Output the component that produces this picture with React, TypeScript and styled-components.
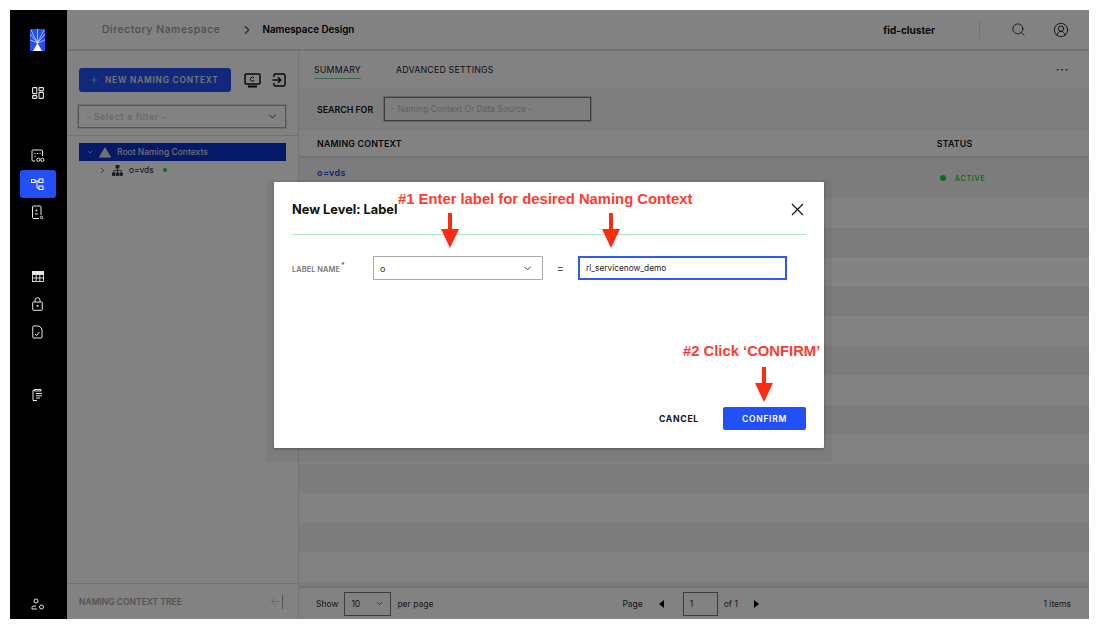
import React from 'react';
import styled, { createGlobalStyle } from 'styled-components';
import { Search, CircleUserRound, ChevronDown, ChevronRight, Plus, X, ArrowLeft } from 'lucide-react';

const GlobalStyle = createGlobalStyle`
  html, body {
    margin: 0;
    padding: 0;
    background: #fff;
    font-family: Inter, "Liberation Sans", sans-serif;
  }
`;

const Page = styled.div`
  width: 1100px;
  height: 628px;
  box-sizing: border-box;
  padding: 10px;
  overflow: hidden;
`;

const Frame = styled.div`
  position: relative;
  width: 1079px;
  height: 609px;
  display: flex;
  background: #fff;
`;

const Sidebar = styled.nav`
  width: 57px;
  flex: none;
  box-sizing: border-box;
  padding-right: 2px;
  background: #000;
  display: flex;
  flex-direction: column;
  align-items: center;
  color: #e8e8e8;
  position: relative;
  z-index: 2;
`;

const LogoBox = styled.div`
  margin-top: 19px;
  width: 15px;
  height: 22px;
  background: #2350f5;
`;

const RailIcon = styled.div<{ $top: number; $active?: boolean }>`
  margin-top: ${(p) => p.$top}px;
  width: 36px;
  height: 28px;
  border-radius: 3px;
  display: flex;
  align-items: center;
  justify-content: center;
  background: ${(p) => (p.$active ? '#2350f5' : 'transparent')};
`;

const Main = styled.div`
  flex: 1;
  min-width: 0;
  display: flex;
  flex-direction: column;
  background: #fff;
`;

const TopBar = styled.header`
  height: 41px;
  flex: none;
  box-sizing: border-box;
  display: flex;
  align-items: center;
  padding-left: 35px;
  border-bottom: 2px solid #e4e4e4;
  background: #fff;
`;

const Crumb = styled.span<{ $current?: boolean }>`
  font-size: ${(p) => (p.$current ? '9.8px' : '10.5px')};
  font-weight: ${(p) => (p.$current ? 600 : 500)};
  letter-spacing: ${(p) => (p.$current ? '0' : '0.5px')};
  color: ${(p) => (p.$current ? '#000' : '#999')};
`;

const CrumbArrow = styled.span`
  display: flex;
  margin: 0 9px 0 19px;
  color: #555;
`;

const Cluster = styled.span`
  margin-left: auto;
  font-size: 10px;
  font-weight: 700;
  color: #111;
`;

const TopDivider = styled.span`
  width: 1px;
  height: 18px;
  background: #ddd;
  margin: 0 31px 0 44px;
`;

const TopIcon = styled.span<{ $gap: number }>`
  display: flex;
  color: #111;
  margin-right: ${(p) => p.$gap}px;
`;

const Body = styled.div`
  flex: 1;
  min-height: 0;
  display: flex;
`;

const TreePanel = styled.aside`
  width: 232px;
  flex: none;
  box-sizing: border-box;
  display: flex;
  flex-direction: column;
  border-right: 1px solid #e4e4e4;
  background: #fff;
`;

const TreeTools = styled.div`
  padding: 17px 12px 0;
  height: 85px;
  flex: none;
  box-sizing: border-box;
  border-bottom: 1px solid #e2e2e2;
`;

const ToolRow = styled.div`
  display: flex;
  align-items: center;
`;

const NewButton = styled.div`
  width: 152px;
  height: 24px;
  flex: none;
  box-sizing: border-box;
  padding-left: 10px;
  border-radius: 3px;
  background: #2350f5;
  color: #e4e4e4;
  display: flex;
  align-items: center;
  gap: 6px;
  font-size: 8.3px;
  font-weight: 600;
  letter-spacing: 0.8px;
  white-space: nowrap;
`;

const ToolIcon = styled.span<{ $left: number }>`
  display: flex;
  align-items: center;
  margin-left: ${(p) => p.$left}px;
  color: #111;
`;

const FilterBox = styled.div`
  margin: 13px 0 0 -1px;
  width: 208px;
  height: 23px;
  box-sizing: border-box;
  border: 1px solid #aaa;
  box-shadow: 0 0 0 0.5px #bbb;
  padding: 0 7px;
  display: flex;
  align-items: center;
  justify-content: space-between;
  font-size: 9px;
  letter-spacing: 0.6px;
  color: #c4c4c4;
`;

const TreeBody = styled.div`
  flex: 1;
  padding: 7px 12px 0;
`;

const RootRow = styled.div`
  height: 18px;
  background: #0a31cf;
  color: #ddd;
  display: flex;
  align-items: center;
  padding-left: 7px;
  font-size: 8.5px;
  font-weight: 500;
`;

const ChildRow = styled.div`
  height: 18px;
  display: flex;
  align-items: center;
  padding-left: 19px;
  font-size: 8.5px;
  color: #222;
`;

const ChildName = styled.span`
  margin-left: 6px;
`;

const TreeDot = styled.span`
  width: 4px;
  height: 4px;
  border-radius: 50%;
  background: #1fcf35;
  margin-left: 9px;
  flex: none;
`;

const TreeFooter = styled.div`
  height: 36px;
  flex: none;
  box-sizing: border-box;
  border-top: 1px solid #e2e2e2;
  display: flex;
  align-items: center;
  justify-content: space-between;
  padding: 0 15px 0 12px;
  font-size: 8.5px;
  font-weight: 600;
  color: #a4a4a4;
`;

const Content = styled.section`
  flex: 1;
  min-width: 0;
  display: flex;
  flex-direction: column;
  background: #fff;
`;

const Tabs = styled.div`
  height: 37px;
  flex: none;
  display: flex;
  align-items: flex-start;
  padding: 13px 20px 0 15px;
  box-sizing: border-box;
  background: #fff;
`;

const Tab = styled.span<{ $active?: boolean; $left?: number }>`
  font-size: 8.8px;
  letter-spacing: 0.2px;
  color: #222;
  padding-bottom: 3px;
  margin-left: ${(p) => p.$left ?? 0}px;
  border-bottom: ${(p) => (p.$active ? '1px solid #6fd08a' : '1px solid transparent')};
`;

const More = styled.span`
  margin-left: auto;
  font-size: 10px;
  font-weight: 700;
  letter-spacing: 1px;
  color: #111;
  line-height: 10px;
`;

const SearchRow = styled.div`
  height: 42px;
  flex: none;
  box-sizing: border-box;
  display: flex;
  align-items: center;
  padding: 1px 0 0 18px;
  background: #f8f8f8;
  border-bottom: 1px solid #eee;
`;

const SearchLabel = styled.span`
  font-size: 8.8px;
  font-weight: 600;
  color: #111;
`;

const SearchBox = styled.div`
  margin-left: 11px;
  width: 207px;
  height: 24px;
  box-sizing: border-box;
  border: 1px solid #777;
  box-shadow: 0 0 0 0.5px #999;
  display: flex;
  align-items: center;
  padding-left: 6px;
  font-size: 8.5px;
  color: #bbb;
  background: #f8f8f8;
`;

const TableHead = styled.div`
  height: 28px;
  flex: none;
  box-sizing: border-box;
  display: flex;
  align-items: center;
  padding-left: 18px;
  font-size: 8.8px;
  font-weight: 600;
  letter-spacing: 0.2px;
  color: #111;
  background: #fff;
  border-bottom: 2px solid #e4e4e4;
`;

const StatusHead = styled.span`
  margin-left: 535px;
`;

const Rows = styled.div`
  flex: 1;
  min-height: 0;
  display: flex;
  flex-direction: column;
  background: #f4f4f4;
`;

const Row = styled.div<{ $light: boolean; $height: number }>`
  height: ${(p) => p.$height}px;
  flex: none;
  display: flex;
  align-items: center;
  padding-left: 18px;
  background: ${(p) => (p.$light ? '#fff' : '#f4f4f4')};
`;

const ContextLink = styled.span`
  font-size: 9px;
  font-weight: 600;
  letter-spacing: 0.4px;
  color: #1f45e0;
  margin-bottom: 12px;
`;

const ActiveCell = styled.span`
  margin-left: 594px;
  display: flex;
  align-items: center;
  gap: 9px;
  font-size: 7px;
  font-weight: 600;
  letter-spacing: 0.8px;
  color: #1fcf35;
`;

const ActiveDot = styled.span`
  width: 6px;
  height: 6px;
  border-radius: 50%;
  background: #1fcf35;
  flex: none;
`;

const Pager = styled.footer`
  height: 33px;
  flex: none;
  box-sizing: border-box;
  border-top: 2px solid #e4e4e4;
  display: flex;
  align-items: center;
  padding: 0 18px 0 17px;
  font-size: 8.5px;
  color: #333;
`;

const SmallBox = styled.div<{ $w: number; $left: number; $right: number }>`
  width: ${(p) => p.$w}px;
  height: 24px;
  box-sizing: border-box;
  border: 1px solid #777;
  margin: 0 ${(p) => p.$right}px 0 ${(p) => p.$left}px;
  padding: 0 6px;
  display: flex;
  align-items: center;
  justify-content: space-between;
  font-size: 8.5px;
`;

const PageLabel = styled.span`
  margin-left: 189px;
`;

const PageArrow = styled.span<{ $dir: 'left' | 'right'; $left: number; $right: number }>`
  width: 0;
  height: 0;
  border-top: 4px solid transparent;
  border-bottom: 4px solid transparent;
  border-${(p) => (p.$dir === 'left' ? 'right' : 'left')}: 5px solid #000;
  margin: 0 ${(p) => p.$right}px 0 ${(p) => p.$left}px;
`;

const Items = styled.span`
  margin-left: auto;
`;

const Scrim = styled.div`
  position: absolute;
  inset: 0 0 0 57px;
  background: rgba(0, 0, 0, 0.49);
  z-index: 1;
`;

const Modal = styled.div`
  position: absolute;
  left: 264px;
  top: 172px;
  width: 550px;
  height: 266px;
  box-sizing: border-box;
  padding: 0 18px 18px 18px;
  background: #fff;
  border-radius: 1px;
  box-shadow: 0 6px 0 8px rgba(0, 0, 0, 0.04), 0 1px 3px rgba(0, 0, 0, 0.3);
  z-index: 3;
  display: flex;
  flex-direction: column;
`;

const ModalHead = styled.div`
  height: 53px;
  flex: none;
  box-sizing: border-box;
  display: flex;
  align-items: center;
  justify-content: space-between;
  padding-top: 3px;
  border-bottom: 1.5px solid #aee6bd;
`;

const ModalTitle = styled.h2`
  margin: 0;
  font-size: 12.8px;
  font-weight: 700;
  color: #111;
`;

const CloseIcon = styled.span`
  display: flex;
  margin-right: -2px;
  color: #111;
`;

const FormRow = styled.div`
  display: flex;
  align-items: center;
  margin-top: 21px;
`;

const FieldLabel = styled.label`
  width: 81px;
  padding-top: 2px;
  font-size: 7.5px;
  font-weight: 600;
  color: #777;
`;

const Required = styled.sup`
  font-size: 7px;
  line-height: 0;
  margin-left: 1px;
  color: #555;
`;

const SelectField = styled.div`
  width: 170px;
  height: 24px;
  box-sizing: border-box;
  border: 1px solid #aaa;
  border-radius: 1px;
  padding: 0 9px 0 6px;
  display: flex;
  align-items: center;
  justify-content: space-between;
  font-size: 9px;
  color: #333;
`;

const Equals = styled.span`
  width: 35px;
  text-align: center;
  font-size: 11px;
  color: #555;
`;

const TextField = styled.div`
  width: 209px;
  height: 24px;
  box-sizing: border-box;
  border: 2px solid #2f59f0;
  padding-left: 6px;
  display: flex;
  align-items: center;
  font-size: 8.3px;
  color: #222;
`;

const ModalActions = styled.div`
  margin-top: auto;
  display: flex;
  align-items: center;
  justify-content: flex-end;
`;

const CancelButton = styled.span`
  font-size: 8.7px;
  font-weight: 700;
  letter-spacing: 0.7px;
  color: #111;
  margin-right: 24px;
`;

const ConfirmButton = styled.div`
  width: 83px;
  height: 23px;
  border-radius: 2px;
  background: #2350f5;
  color: #fff;
  display: flex;
  align-items: center;
  justify-content: center;
  font-size: 8.5px;
  font-weight: 600;
  letter-spacing: 0.7px;
`;

const Callout = styled.span<{ $x: number; $y: number }>`
  position: absolute;
  left: ${(p) => p.$x}px;
  top: ${(p) => p.$y}px;
  z-index: 4;
  font-family: "Liberation Sans", Arial, sans-serif;
  font-size: 14.8px;
  font-weight: 700;
  color: #ff3b30;
  white-space: nowrap;
`;

const ArrowMark = styled.svg<{ $x: number; $y: number }>`
  position: absolute;
  left: ${(p) => p.$x}px;
  top: ${(p) => p.$y}px;
  z-index: 4;
`;

const Arrow = ({ x, y }: { x: number; y: number }) => (
  <ArrowMark $x={x} $y={y} width="18" height="35" viewBox="0 0 18 35">
    <path d="M7 0h4v16h7L9 35 0 16h7z" fill="#ff2a12" />
  </ArrowMark>
);

// product mark: rays fanning out over a white peak
const Logo = () => (
  <LogoBox>
    <svg width="15" height="22" viewBox="0 0 15 22" stroke="#fff" strokeWidth="0.6" fill="none">
      <path d="M7.5 0v14M7.5 14L0 5M7.5 14L15 5M7.5 14L1 1M7.5 14L14 1M7.5 14L0 11M7.5 14L15 11" />
      <path d="M7.5 14L12 22H3z" fill="#fff" stroke="none" />
    </svg>
  </LogoBox>
);

const Flow = () => (
  <svg width="13" height="13" viewBox="0 0 13 13" fill="none" stroke="#fff" strokeWidth="1">
    <rect x="0.5" y="1.5" width="3.5" height="3" />
    <rect x="8" y="1" width="4" height="3.5" />
    <rect x="8" y="8" width="4" height="3.5" />
    <path d="M4 3h4M6 3v7h2" />
  </svg>
);

const Apps = () => (
  <svg width="12" height="12" viewBox="0 0 12 12" fill="none" stroke="#e8e8e8" strokeWidth="1.1">
    <rect x="0.6" y="0.6" width="4.2" height="6" rx="0.6" />
    <rect x="7" y="0.6" width="4.4" height="3" rx="0.6" />
    <rect x="0.6" y="8.6" width="4.2" height="2.8" rx="0.6" />
    <rect x="7" y="5.400" width="4.4" height="6" rx="0.6" />
  </svg>
);

const Links = () => (
  <svg width="14" height="14" viewBox="0 0 14 14" fill="none" stroke="#e8e8e8" strokeWidth="1">
    <path d="M4 12H2Q1 12 1 11V2Q1 1 2 1h8.500Q11.500 1 11.500 2v5" />
    <path d="M3.500 4.500h1.200M6 4.500h1.200M8.500 4.500h1.200M3.500 7.500h1.200" />
    <circle cx="7.300" cy="10.800" r="1.600" />
    <circle cx="11.300" cy="10.800" r="1.600" />
  </svg>
);

const Badge = () => (
  <svg width="13" height="15" viewBox="0 0 13 15" fill="none" stroke="#e8e8e8" strokeWidth="1">
    <path d="M8 13.500H2.500Q1.500 13.500 1.500 12.500V2Q1.500 1 2.500 1h6.500Q10 1 10 2v8" />
    <path d="M4 9h3" />
    <circle cx="5.500" cy="5.500" r="1" fill="#e8e8e8" stroke="none" />
    <circle cx="10.500" cy="12.500" r="1.200" />
  </svg>
);

const TableGrid = () => (
  <svg width="12" height="11" viewBox="0 0 12 11" fill="none" stroke="#e8e8e8" strokeWidth="0.9">
    <rect x="0.500" y="0.500" width="11" height="10" />
    <rect x="0.500" y="0.500" width="11" height="3" fill="#e8e8e8" />
    <path d="M4.200 3.500v7M7.800 3.500v7M0.500 7h11" />
  </svg>
);

const LockIcon = () => (
  <svg width="11" height="14" viewBox="0 0 11 14" fill="none" stroke="#e8e8e8" strokeWidth="1">
    <rect x="0.700" y="5" width="9.600" height="8.300" rx="0.800" />
    <path d="M3 5V3.200a2.500 2.500 0 0 1 5 0V5" />
    <circle cx="5.500" cy="9" r="1" fill="#e8e8e8" stroke="none" />
  </svg>
);

const FileCheck = () => (
  <svg width="11" height="14" viewBox="0 0 11 14" fill="none" stroke="#e8e8e8" strokeWidth="1">
    <path d="M1.500 1h5.500L10 4v8Q10 13 9 13H1.800Q0.800 13 0.800 12V1.700Q0.800 1 1.500 1z" />
    <path d="M3 9l1.600 1.500L7.500 7" />
  </svg>
);

const Clipboard = () => (
  <svg width="11" height="13" viewBox="0 0 11 13" fill="none" stroke="#e8e8e8" strokeWidth="1">
    <path d="M2 2.500H1v10h4" />
    <path d="M2.500 1.500h6.500v1.500H2.500z" />
    <path d="M4 5.500h6M4 7.800h6M4 10h4" />
  </svg>
);

const AdminGear = () => (
  <svg width="14" height="13" viewBox="0 0 14 13" fill="none" stroke="#e8e8e8" strokeWidth="1">
    <circle cx="5" cy="3" r="2" />
    <path d="M1 11V9.500Q1 8 3 8h2M1 11h5" />
    <circle cx="10.500" cy="9" r="2" />
  </svg>
);

const Monitor = () => (
  <svg width="17" height="15" viewBox="0 0 17 15" fill="none" stroke="#111" strokeWidth="1.500">
    <rect x="1" y="1" width="15" height="10" rx="1" />
    <path d="M4 13.500h9" strokeWidth="2" />
    <path d="M10 5a2 2 0 1 0 .2 2" strokeWidth="1" />
  </svg>
);

const ImportBox = () => (
  <svg width="14" height="14" viewBox="0 0 14 14" fill="none" stroke="#111" strokeWidth="1.400">
    <path d="M2 4V2.200Q2 1 3.200 1h8.300Q13 1 13 2.200v9.600Q13 13 11.500 13H3.200Q2 13 2 11.800V10" />
    <path d="M0.500 7h8M6 4.300L8.800 7 6 9.700" />
  </svg>
);

const HierarchyIcon = () => (
  <svg width="11" height="11" viewBox="0 0 11 11" fill="#333" stroke="#333" strokeWidth="0.8">
    <rect x="4" y="0.500" width="3" height="2.500" />
    <rect x="0.500" y="8" width="2.500" height="2.500" />
    <rect x="4.250" y="8" width="2.500" height="2.500" />
    <rect x="8" y="8" width="2.500" height="2.500" />
    <path d="M5.500 3v5M1.750 8V5.500h7.500V8" fill="none" />
  </svg>
);

const PeakMark = styled.svg`
  margin: 0 6px 0 5px;
`;

const Peak = () => (
  <PeakMark width="12" height="11" viewBox="0 0 12 11">
    <path d="M6 0l6 10H0z" fill="#ddd" />
    <path d="M0 10.500h12" stroke="#999" strokeWidth="1" />
  </PeakMark>
);

const ChildChevron = styled.span`
  display: flex;
  margin-right: 5px;
`;

const CollapseBar = styled.span`
  width: 1px;
  height: 14px;
  background: #aaa;
`;

const rowCount = 14;

export default function App() {
  return (
    <>
      <GlobalStyle />
      <Page>
        <Frame>
          <Sidebar>
            <Logo />
            <RailIcon $top={28}><Apps /></RailIcon>
            <RailIcon $top={35}><Links /></RailIcon>
            <RailIcon $top={0} $active><Flow /></RailIcon>
            <RailIcon $top={0}><Badge /></RailIcon>
            <RailIcon $top={36}><TableGrid /></RailIcon>
            <RailIcon $top={0}><LockIcon /></RailIcon>
            <RailIcon $top={0}><FileCheck /></RailIcon>
            <RailIcon $top={34}><Clipboard /></RailIcon>
            <RailIcon $top={182}><AdminGear /></RailIcon>
          </Sidebar>

          <Main>
            <TopBar>
              <Crumb>Directory Namespace</Crumb>
              <CrumbArrow><ChevronRight size={14} /></CrumbArrow>
              <Crumb $current>Namespace Design</Crumb>
              <Cluster>fid-cluster</Cluster>
              <TopDivider />
              <TopIcon $gap={27}><Search size={15} strokeWidth={1.3} /></TopIcon>
              <TopIcon $gap={20}><CircleUserRound size={16} strokeWidth={1.3} /></TopIcon>
            </TopBar>

            <Body>
              <TreePanel>
                <TreeTools>
                  <ToolRow>
                    <NewButton>
                      <Plus size={10} strokeWidth={1.5} />
                      NEW NAMING CONTEXT
                    </NewButton>
                    <ToolIcon $left={13}><Monitor /></ToolIcon>
                    <ToolIcon $left={11}><ImportBox /></ToolIcon>
                  </ToolRow>
                  <FilterBox>
                    - Select a filter -
                    <ChevronDown size={11} color="#333" />
                  </FilterBox>
                </TreeTools>
                <TreeBody>
                  <RootRow>
                    <ChevronDown size={8} />
                    <Peak />
                    Root Naming Contexts
                  </RootRow>
                  <ChildRow>
                    <ChildChevron><ChevronRight size={9} /></ChildChevron>
                    <HierarchyIcon />
                    <ChildName>o=vds</ChildName>
                    <TreeDot />
                  </ChildRow>
                </TreeBody>
                <TreeFooter>
                  NAMING CONTEXT TREE
                  <ToolIcon $left={0}>
                    <ArrowLeft size={13} strokeWidth={1} color="#aaa" />
                    <CollapseBar />
                  </ToolIcon>
                </TreeFooter>
              </TreePanel>

              <Content>
                <Tabs>
                  <Tab $active>SUMMARY</Tab>
                  <Tab $left={35}>ADVANCED SETTINGS</Tab>
                  <More>···</More>
                </Tabs>
                <SearchRow>
                  <SearchLabel>SEARCH FOR</SearchLabel>
                  <SearchBox>- Naming Context Or Data Source -</SearchBox>
                </SearchRow>
                <TableHead>
                  NAMING CONTEXT
                  <StatusHead>STATUS</StatusHead>
                </TableHead>
                <Rows>
                  {Array.from({ length: rowCount }).map((_, i) => (
                    <Row key={i} $light={i % 2 === 1} $height={i === 0 ? 40 : 29.5}>
                      {i === 0 && (
                        <>
                          <ContextLink>o=vds</ContextLink>
                          <ActiveCell>
                            <ActiveDot />
                            ACTIVE
                          </ActiveCell>
                        </>
                      )}
                    </Row>
                  ))}
                </Rows>
                <Pager>
                  Show
                  <SmallBox $w={47} $left={6} $right={6}>
                    10
                    <ChevronDown size={9} />
                  </SmallBox>
                  per page
                  <PageLabel>Page</PageLabel>
                  <PageArrow $dir="left" $left={16} $right={19} />
                  <SmallBox $w={35} $left={0} $right={6}>1</SmallBox>
                  of 1
                  <PageArrow $dir="right" $left={16} $right={0} />
                  <Items>1 items</Items>
                </Pager>
              </Content>
            </Body>
          </Main>

          <Scrim />

          <Modal>
            <ModalHead>
              <ModalTitle>New Level: Label</ModalTitle>
              <CloseIcon><X size={21} strokeWidth={1.3} /></CloseIcon>
            </ModalHead>
            <FormRow>
              <FieldLabel>LABEL NAME<Required>*</Required></FieldLabel>
              <SelectField>
                o
                <ChevronDown size={11} />
              </SelectField>
              <Equals>=</Equals>
              <TextField>rl_servicenow_demo</TextField>
            </FormRow>
            <ModalActions>
              <CancelButton>CANCEL</CancelButton>
              <ConfirmButton>CONFIRM</ConfirmButton>
            </ModalActions>
          </Modal>

          <Callout $x={388} $y={181}>#1 Enter label for desired Naming Context</Callout>
          <Arrow x={431} y={203} />
          <Arrow x={592} y={203} />
          <Callout $x={673} $y={333}>#2 Click ‘CONFIRM’</Callout>
          <Arrow x={745} y={357} />
        </Frame>
      </Page>
    </>
  );
}
